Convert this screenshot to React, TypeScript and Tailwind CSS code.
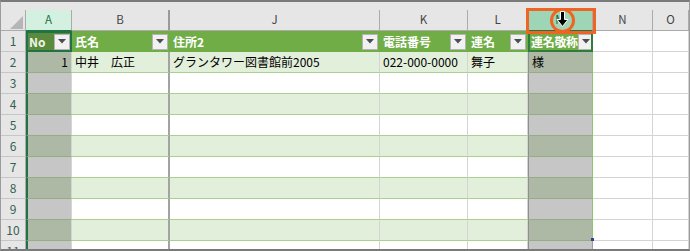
import React from "react";

const cols = ["A", "B", "J", "K", "L", "M", "N", "O"];

const headers: Record<string, string> = {
  A: "No",
  B: "氏名",
  J: "住所2",
  K: "電話番号",
  L: "連名",
  M: "連名敬称",
};

const row2: Record<string, string> = {
  A: "1",
  B: "中井　広正",
  J: "グランタワー図書館前2005",
  K: "022-000-0000",
  L: "舞子",
  M: "様",
};

const rows = [1, 2, 3, 4, 5, 6, 7, 8, 9, 10, 11];

function FilterButton() {
  return (
    <div className="ml-auto flex h-[16px] w-[16px] shrink-0 items-center justify-center border border-[#b4b4b4] bg-[#f1f1f1]">
      <svg width="8" height="5" viewBox="0 0 8 5">
        <path d="M0 0 H8 L4 4.5 Z" fill="#4d4d4d" />
      </svg>
    </div>
  );
}

function cellClass(r: number, c: string) {
  const inTable = r <= 10 && c !== "N" && c !== "O";
  const sel = c === "A" || c === "M";

  if (r === 1 && inTable) {
    if (c === "A")
      return "border-2 border-[#217346] bg-[#5a8a3c] text-[#eef5e8] pl-[1px]";
    if (c === "M")
      return "border-2 border-[#2f7d3b] bg-[#70ad47] text-white pl-[1px]";
    return "bg-[#70ad47] text-white pl-[3px] pr-[2px]";
  }

  let bg = "bg-white";
  let bb = "border-b border-b-[#d4d4d4]";
  if (inTable) {
    const band = r % 2 === 0;
    if (band) bg = sel ? "bg-[#adb9a4]" : "bg-[#e2efda]";
    else bg = sel ? "bg-[#c6c6c6]" : "bg-white";
    bb = sel ? "border-b border-b-[#93ad84]" : "border-b border-b-[#a9d08e]";
  } else if (sel) {
    bg = "bg-[#c6c6c6]";
  }

  let br = "border-r border-r-[#d4d4d4]";
  if (c === "B") br = "border-r-2 border-r-[#a3a3a3]";
  if (c === "M") br = inTable ? "border-r border-r-[#8fc46d]" : "border-r border-r-[#a0a0a0]";

  let bl = "";
  if (c === "A") bl = "border-l-2 border-l-[#217346]";
  if (c === "M") bl = "border-l border-l-[#8e8e8e]";

  return `${bg} ${bb} ${br} ${bl} pl-[3px] text-black`;
}

export default function App() {
  return (
    <div className="relative h-[251px] w-[690px] overflow-hidden border-y-2 border-x border-y-[#7a7a7a] border-x-[#9c9c9c] bg-[#e6e6e6] font-['Noto_Sans_CJK_JP','Noto_Sans',sans-serif]">
      <div className="h-[8px]" />

      {/* column letters */}
      <div className="grid h-[21px] grid-cols-[25px_46px_98px_210px_88px_60px_65px_60px_1fr]">
        <div className="relative border-r border-b border-[#ababab]">
          <svg className="absolute left-[9px] top-[6px]" width="13" height="13" viewBox="0 0 13 13">
            <path d="M13 0 V13 H0 Z" fill="#b6b6b6" />
          </svg>
        </div>
        {cols.map((c) => (
          <div
            key={c}
            className={`flex items-center justify-center border-r border-b text-[11.5px] ${
              c === "A"
                ? "border-[#ababab] border-b-[#217346] bg-[#d3f0e0] text-[#217346]"
                : c === "M"
                ? "border-[#ababab] border-b-[#217346] bg-[#9fd5b7] text-[#135e35]"
                : c === "B"
                ? "border-[#ababab] border-r-2 border-r-[#9a9a9a] text-[#444]"
                : "border-[#ababab] text-[#444]"
            }`}
          >
            {c}
          </div>
        ))}
      </div>

      {rows.map((r) => (
        <div
          key={r}
          className="grid h-[21px] grid-cols-[25px_46px_98px_210px_88px_60px_65px_60px_1fr]"
        >
          <div className="flex items-center justify-center border-r border-b border-r-[#ababab] border-b-[#c6c6c6] bg-[#e6e6e6] text-[12px] text-[#355f50]">
            {r}
          </div>
          {cols.map((c) => (
            <div
              key={c}
              className={`flex items-center overflow-hidden whitespace-nowrap text-[12px] leading-none ${cellClass(r, c)} ${
                r === 1 ? "font-bold" : ""
              } ${r === 2 && c === "A" ? "justify-end pr-[3px]" : ""}`}
            >
              {r === 1 && headers[c] ? (
                <>
                  <span className={c === "M" ? "tracking-[-0.3px]" : ""}>{headers[c]}</span>
                  <FilterButton />
                </>
              ) : r === 2 && row2[c] ? (
                <span>{row2[c]}</span>
              ) : null}
            </div>
          ))}
        </div>
      ))}

      {/* table resize handle */}
      <div className="absolute left-[590px] top-[236px] h-[3px] w-[3px] bg-[#34438f]" />

      {/* orange highlight on column M */}
      <div className="absolute left-[525px] top-[6px] h-[26px] w-[70px] border-[3px] border-[#ef6423]" />
      <div className="absolute left-[549px] top-[6px] h-[25px] w-[25px] rounded-full border-[3px] border-[#ef6423]" />
      <svg className="absolute left-[555px] top-[9px]" width="13" height="17" viewBox="0 0 13 17">
        <path
          d="M4.5 0.5 H8.5 V8.5 H12 L6.5 15.5 L1 8.5 H4.5 Z"
          fill="#000"
          stroke="#fff"
          strokeWidth="1"
        />
      </svg>
    </div>
  );
}
